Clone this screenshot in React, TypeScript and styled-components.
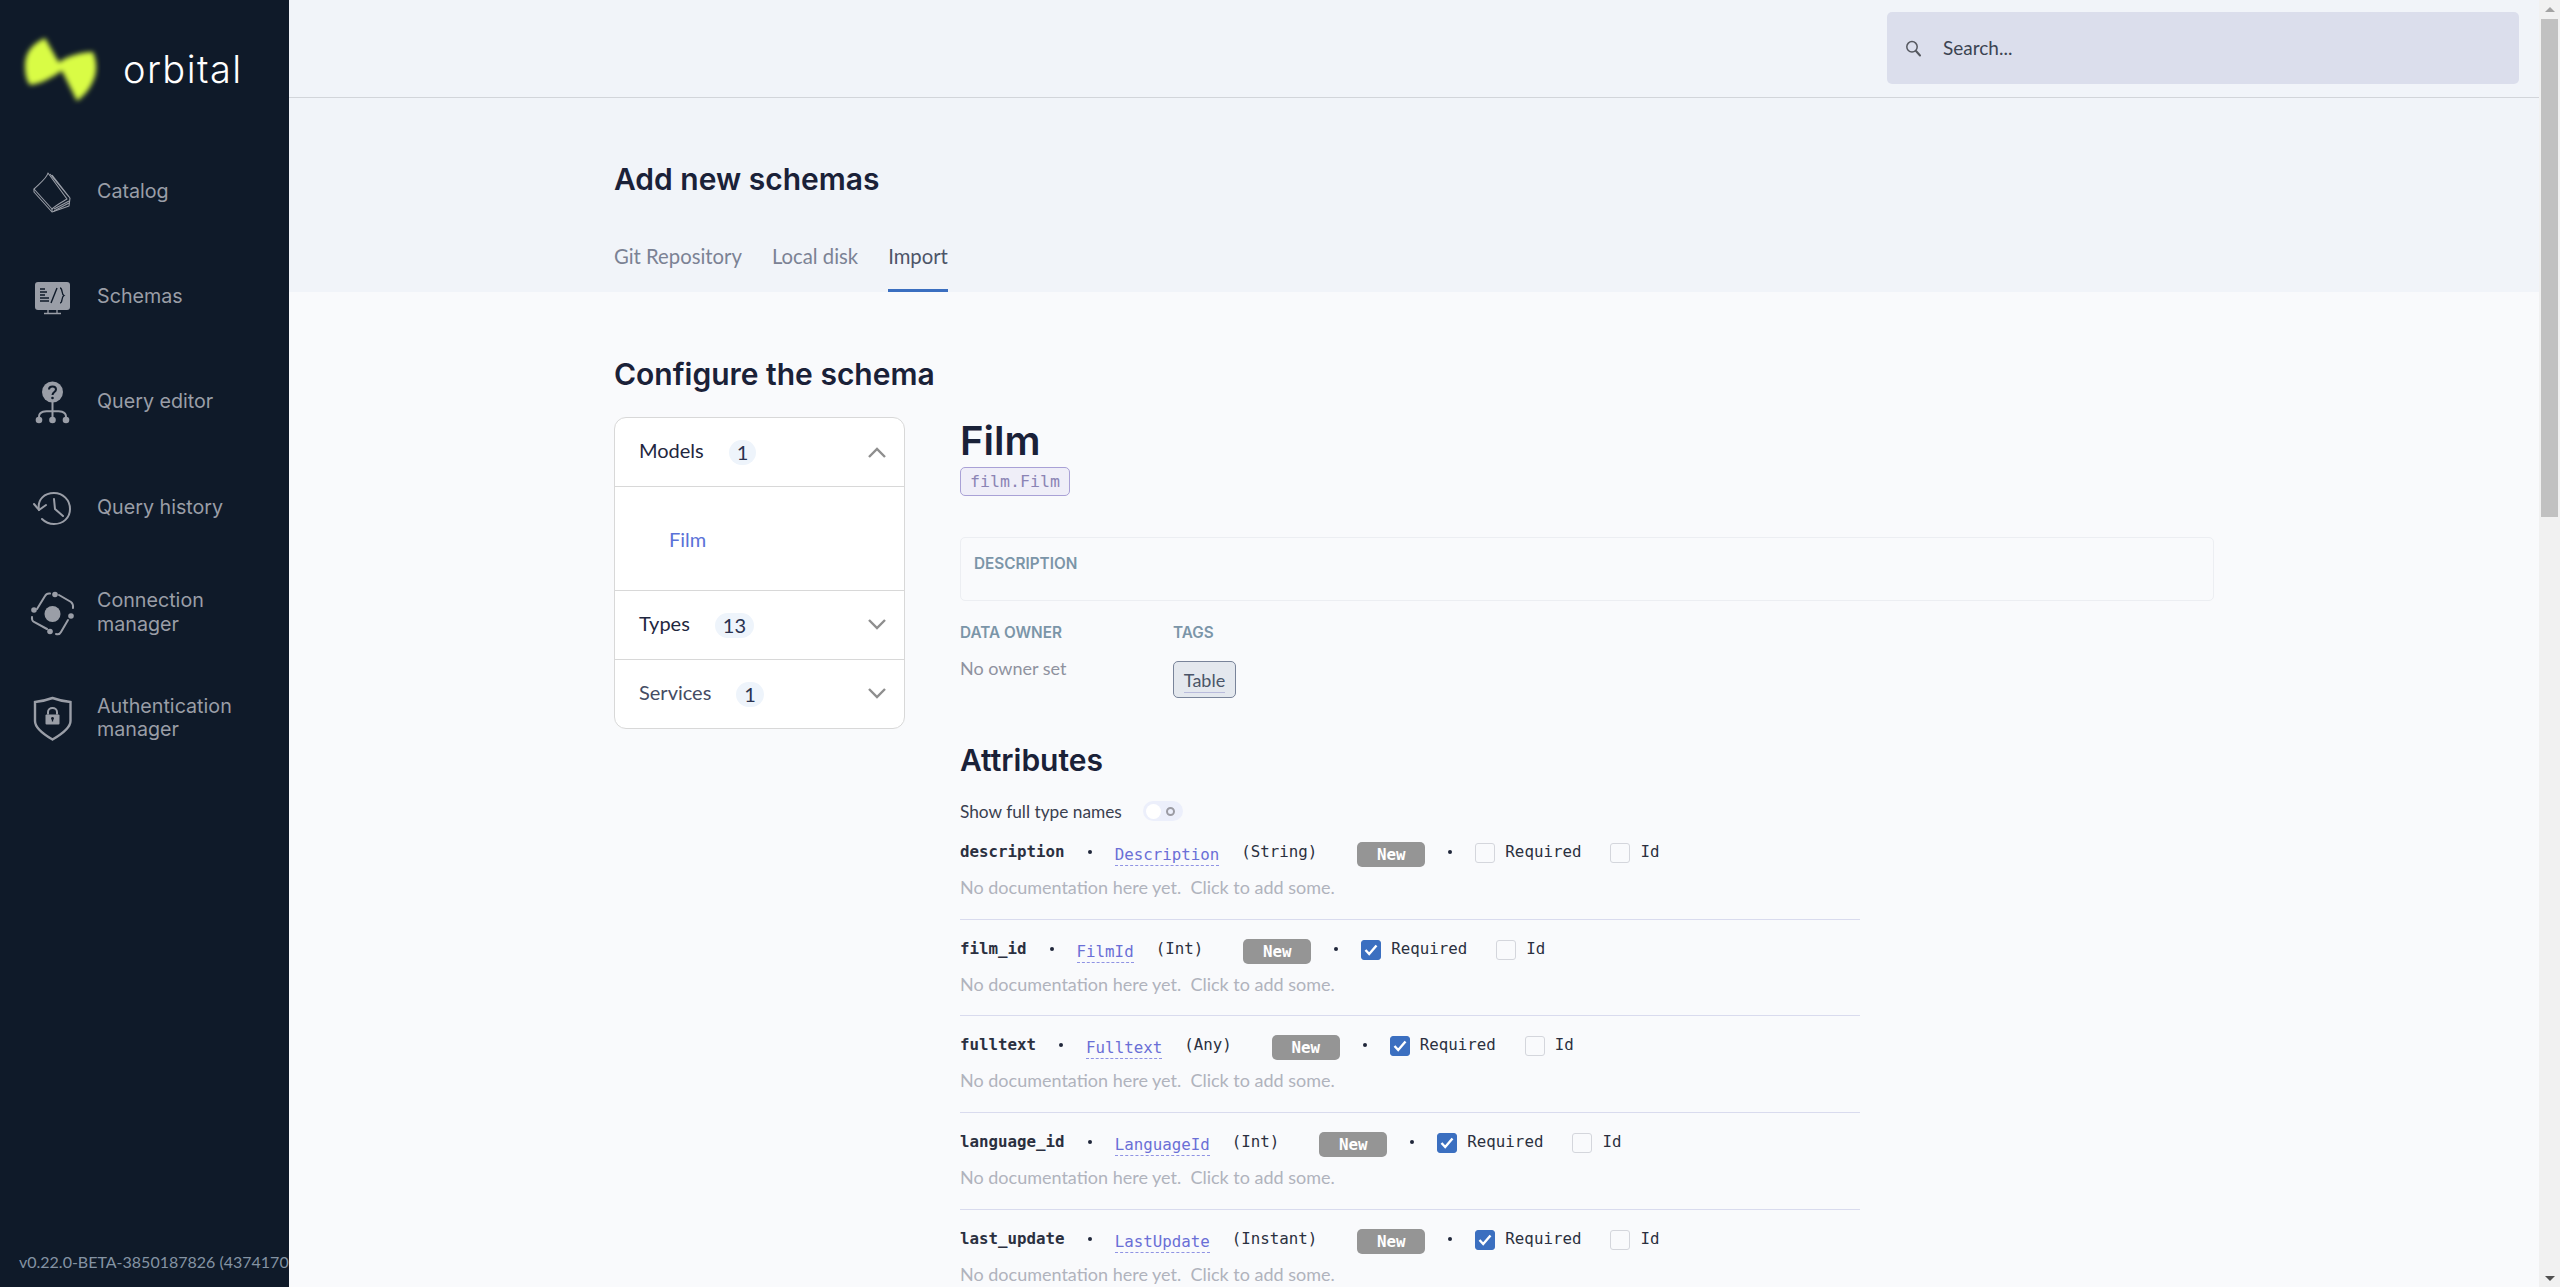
import React from 'react'
import styled, { createGlobalStyle } from 'styled-components'

const HEADING = `Inter, 'Liberation Sans', sans-serif`
const BODY = `Lato, 'Noto Sans', sans-serif`
const MONO = `'DejaVu Sans Mono', 'Liberation Mono', monospace`

type Attribute = {
  name: string
  type: string
  primitive: string
  required: boolean
}

const attributes: Attribute[] = [
  { name: 'description', type: 'Description', primitive: 'String', required: false },
  { name: 'film_id', type: 'FilmId', primitive: 'Int', required: true },
  { name: 'fulltext', type: 'Fulltext', primitive: 'Any', required: true },
  { name: 'language_id', type: 'LanguageId', primitive: 'Int', required: true },
  { name: 'last_update', type: 'LastUpdate', primitive: 'Instant', required: true },
]

const CatalogIcon = () => (
  <svg width="48" height="48" viewBox="0 0 48 48" fill="none" stroke="currentColor" strokeWidth="1.1" strokeLinejoin="round">
    <path d="M20 5 C19 10 12 15 6 21 L24 41 C28 37 34 34 39 31 Z" />
    <path d="M6 21 L6 24 L24 44 L41 38 L42 30" />
    <path d="M24 41 L24 44 M26 41 L41 33 M26 43 L41 35" />
    <path d="M22 6 L41 29 M24 7 L42 30" />
  </svg>
)

const SchemasIcon = () => (
  <svg width="48" height="48" viewBox="0 0 48 48" fill="none">
    <rect x="7" y="9" width="35" height="28" rx="3" fill="currentColor" />
    <path d="M20 37 L20 40 M29 37 L29 40 M16 40.5 L33 40.5" stroke="currentColor" strokeWidth="1.3" />
    <path d="M12 16 L17 16 M12 19 L19 19 M12 22 L17 22 M12 25 L21 25 M12 28 L21 28" stroke="#0f1a29" strokeWidth="1.3" />
    <path d="M23 30 L29 15" stroke="#0f1a29" strokeWidth="1.4" />
    <path d="M32 15 C35 15 33 21 36 22.5 C33 24 35 30 32 30" stroke="#0f1a29" strokeWidth="1.3" />
  </svg>
)

const QueryIcon = () => (
  <svg width="48" height="48" viewBox="0 0 48 48" fill="none" stroke="currentColor">
    <circle cx="24.5" cy="14" r="10.5" fill="currentColor" stroke="none" />
    <path d="M21 11.5 C21 7.5 28 7.5 28 11.5 C28 14 24.5 14 24.5 17" stroke="#0f1a29" strokeWidth="2" />
    <circle cx="24.5" cy="20" r="1.3" fill="#0f1a29" stroke="none" />
    <path d="M24.5 24 L24.5 42 M11 42 L11 39 C11 33 17 33 24.5 33 C32 33 38 33 38 39 L38 42" strokeWidth="2" />
    <circle cx="11" cy="42" r="3.3" fill="currentColor" stroke="none" />
    <circle cx="24.5" cy="42" r="3.3" fill="currentColor" stroke="none" />
    <circle cx="38" cy="42" r="3.3" fill="currentColor" stroke="none" />
  </svg>
)

const HistoryIcon = () => (
  <svg width="48" height="48" viewBox="0 0 48 48" fill="none" stroke="currentColor" strokeWidth="2" strokeLinecap="round">
    <path d="M11 26 C9 15 17 9 26 9 C35 9 42 16 42 25 C42 34 35 40 26 40 C21 40 17 38 14 35" />
    <path d="M6 20 L11 26 L18 21" />
    <path d="M26 15 L27 25 L35 32" />
  </svg>
)

const ConnectionIcon = () => (
  <svg width="48" height="48" viewBox="0 0 48 48" fill="none" stroke="currentColor" strokeWidth="2" strokeLinecap="round">
    <circle cx="24.5" cy="25" r="8" fill="currentColor" stroke="none" />
    <path d="M9 20 L17 7 Q18.5 4 22 4.5" />
    <path d="M31 6 L43 13 Q45.5 15 45 19" />
    <path d="M40 31 L33 43 Q31.5 46 28 45" />
    <path d="M19 40 L6 33 Q3.5 31.5 4 28" />
    <circle cx="27" cy="5.5" r="2.8" fill="currentColor" stroke="none" />
    <circle cx="43" cy="27" r="2.8" fill="currentColor" stroke="none" />
    <circle cx="22" cy="42.5" r="2.8" fill="currentColor" stroke="none" />
    <circle cx="6" cy="21" r="2.8" fill="currentColor" stroke="none" />
  </svg>
)

const AuthIcon = () => (
  <svg width="48" height="48" viewBox="0 0 48 48" fill="none">
    <path d="M24.5 4 C30 6 37 7.5 42.5 8 L42.5 27 C42.5 34 34 40 24.5 45.5 C15 40 7 34 7 27 L7 8 C12.5 7.5 19 6 24.5 4 Z" stroke="currentColor" strokeWidth="2.4" />
    <rect x="17.5" y="20.5" width="14" height="10" rx="1" fill="currentColor" />
    <path d="M20 20.5 L20 18 C20 12.5 29 12.5 29 18 L29 20.5" stroke="currentColor" strokeWidth="2" />
    <circle cx="24.5" cy="24.5" r="1.4" fill="#0f1a29" />
    <path d="M24.5 24.5 L24.5 27.5" stroke="#0f1a29" strokeWidth="1.3" />
  </svg>
)

const SearchIcon = () => (
  <svg width="17" height="17" viewBox="0 0 17 17" fill="none" stroke="#55585f" strokeWidth="1.5" strokeLinecap="round">
    <circle cx="7" cy="6.8" r="5.2" />
    <path d="M11 11 L15 15.5" strokeWidth="2" />
  </svg>
)

const Chevron = ({ up }: { up?: boolean }) => (
  <svg width="20" height="12" viewBox="0 0 20 12" fill="none" stroke="#8e8e8e" strokeWidth="2.4">
    <path d={up ? 'M2 11 L10 3 L18 11' : 'M2 1 L10 9 L18 1'} />
  </svg>
)

const Logo = () => (
  <svg width="84" height="80" viewBox="0 0 84 80">
    <defs>
      <filter id="logo-blur" x="-20%" y="-20%" width="140%" height="140%">
        <feGaussianBlur stdDeviation="2.8" />
      </filter>
    </defs>
    <g fill="#d9fc45" filter="url(#logo-blur)">
      <path d="M28 13 C15 19 8 28 8 40 C8 48 9 55 13 60 C24 59 36 52 46 45 Z" />
      <path d="M41 38 C50 31 64 27 76 27 C80 37 80 46 77 54 C73 64 67 71 60 76 Z" />
    </g>
  </svg>
)

const navItems = [
  { label: 'Catalog', icon: <CatalogIcon /> },
  { label: 'Schemas', icon: <SchemasIcon /> },
  { label: 'Query editor', icon: <QueryIcon /> },
  { label: 'Query history', icon: <HistoryIcon /> },
  { label: 'Connection manager', icon: <ConnectionIcon /> },
  { label: 'Authentication manager', icon: <AuthIcon /> },
]

const App: React.FC = () => (
  <Shell>
    <GlobalStyle />
    <Sidebar>
      <Brand>
        <Logo />
        <BrandName>orbital</BrandName>
      </Brand>
      <Nav>
        {navItems.map((item) => (
          <NavItem key={item.label}>
            {item.icon}
            <NavLabel>{item.label}</NavLabel>
          </NavItem>
        ))}
      </Nav>
      <Version>v0.22.0-BETA-3850187826 (4374170)</Version>
    </Sidebar>

    <Main>
      <TopBar>
        <SearchBox>
          <SearchIcon />
          <SearchText>Search...</SearchText>
        </SearchBox>
      </TopBar>

      <PageHeader>
        <PageTitle>Add new schemas</PageTitle>
        <Tabs>
          <Tab>Git Repository</Tab>
          <Tab>Local disk</Tab>
          <Tab $active>Import</Tab>
        </Tabs>
      </PageHeader>

      <Content>
        <SectionTitle>Configure the schema</SectionTitle>
        <Columns>
          <Accordion>
            <AccordionRow>
              <AccordionLabel $strong>Models</AccordionLabel>
              <Count>1</Count>
              <Chevron up />
            </AccordionRow>
            <AccordionBody>
              <ModelLink>Film</ModelLink>
            </AccordionBody>
            <AccordionRow>
              <AccordionLabel $strong>Types</AccordionLabel>
              <Count>13</Count>
              <Chevron />
            </AccordionRow>
            <AccordionRow>
              <AccordionLabel>Services</AccordionLabel>
              <Count>1</Count>
              <Chevron />
            </AccordionRow>
          </Accordion>

          <Detail>
            <ModelTitle>Film</ModelTitle>
            <QualifiedName>film.Film</QualifiedName>

            <DescriptionBox>
              <Caption>DESCRIPTION</Caption>
            </DescriptionBox>

            <MetaRow>
              <MetaOwner>
                <Caption>DATA OWNER</Caption>
                <OwnerText>No owner set</OwnerText>
              </MetaOwner>
              <div>
                <Caption>TAGS</Caption>
                <TagChip>
                  <TagText>Table</TagText>
                </TagChip>
              </div>
            </MetaRow>

            <AttributesTitle>Attributes</AttributesTitle>
            <ToggleRow>
              <span>Show full type names</span>
              <Toggle>
                <Knob />
                <Ring />
              </Toggle>
            </ToggleRow>

            {attributes.map((attr) => (
              <AttributeRow key={attr.name}>
                <AttributeLine>
                  <AttrName>{attr.name}</AttrName>
                  <Dot />
                  <TypeLink>{attr.type}</TypeLink>
                  <Primitive>({attr.primitive})</Primitive>
                  <NewBadge>New</NewBadge>
                  <Dot />
                  <CheckField>
                    <Checkbox $checked={attr.required}>
                      {attr.required && (
                        <svg width="14" height="12" viewBox="0 0 14 12" fill="none" stroke="#fff" strokeWidth="2.4">
                          <path d="M1.5 6 L5.2 10 L12.5 1.5" />
                        </svg>
                      )}
                    </Checkbox>
                    Required
                  </CheckField>
                  <CheckField>
                    <Checkbox />
                    Id
                  </CheckField>
                </AttributeLine>
                <DocText>No documentation here yet.&nbsp; Click to add some.</DocText>
              </AttributeRow>
            ))}
          </Detail>
        </Columns>
      </Content>
    </Main>

    <ScrollRail>
      <ScrollArrow $up />
      <ScrollThumb />
      <ScrollArrow />
    </ScrollRail>
  </Shell>
)

export default App

const GlobalStyle = createGlobalStyle`
  html, body {
    margin: 0;
    height: 100%;
    overflow: hidden;
  }
  * {
    box-sizing: border-box;
  }
`

const Shell = styled.div`
  display: flex;
  height: 100vh;
  font-family: ${BODY};
`

const Sidebar = styled.aside`
  width: 289px;
  flex-shrink: 0;
  background: #0f1a29;
  display: flex;
  flex-direction: column;
  overflow: hidden;
  color: #9a9ea7;
`

const Brand = styled.div`
  display: flex;
  align-items: center;
  height: 97px;
  padding: 32px 0 0 17px;
`

const BrandName = styled.span`
  margin: 8px 0 0 22px;
  font-family: ${HEADING};
  font-weight: 300;
  font-size: 38px;
  line-height: 40px;
  color: #fff;
  letter-spacing: 1.4px;
`

const Nav = styled.nav`
  display: flex;
  flex-direction: column;
  padding-top: 42px;
  flex: 1;
`

const NavItem = styled.div`
  height: 105.3px;
  display: flex;
  align-items: center;
  gap: 21px;
  padding-left: 28px;
`

const NavLabel = styled.span`
  width: 155px;
  font-family: ${HEADING};
  font-size: 19.7px;
  line-height: 23.5px;
  color: #9a9ea7;
`

const Version = styled.div`
  padding: 0 0 15px 19px;
  font-size: 16px;
  line-height: 20px;
  white-space: nowrap;
  color: #8493a3;
`

const Main = styled.main`
  flex: 1;
  min-width: 0;
  overflow: hidden;
  background: #f9fafc;
`

const ScrollRail = styled.div`
  width: 21px;
  flex-shrink: 0;
  display: flex;
  flex-direction: column;
  align-items: center;
  background: #f1f1f1;
`

const ScrollArrow = styled.div<{ $up?: boolean }>`
  width: 0;
  height: 0;
  margin: ${(p) => (p.$up ? '7px 0 7px' : 'auto 0 6px')};
  border-left: 5px solid transparent;
  border-right: 5px solid transparent;
  border-${(p) => (p.$up ? 'bottom' : 'top')}: 5px solid ${(p) => (p.$up ? '#a3a3a3' : '#505050')};
`

const ScrollThumb = styled.div`
  width: 17px;
  height: 498px;
  background: #c1c1c1;
`

const TopBar = styled.header`
  height: 98px;
  display: flex;
  justify-content: flex-end;
  padding: 12px 20px 0 0;
  background: #f1f4f9;
  border-bottom: 1px solid #d2d5da;
`

const SearchBox = styled.div`
  width: 632px;
  height: 72px;
  display: flex;
  align-items: center;
  gap: 21px;
  padding-left: 18px;
  border-radius: 5px;
  background: #dbdeec;
`

const SearchText = styled.span`
  margin-bottom: 2px;
  font-size: 19px;
  color: #3c4452;
`

const PageHeader = styled.div`
  height: 194px;
  padding: 61px 0 0 325px;
  background: #f1f4f9;
  display: flex;
  flex-direction: column;
`

const PageTitle = styled.h1`
  margin: 0;
  font-family: ${HEADING};
  font-weight: 600;
  font-size: 30px;
  line-height: 40px;
  color: #1a2138;
`

const Tabs = styled.div`
  margin-top: auto;
  display: flex;
  gap: 30px;
`

const Tab = styled.div<{ $active?: boolean }>`
  height: 56px;
  padding-top: 6px;
  font-size: 20.3px;
  line-height: 28px;
  color: ${(p) => (p.$active ? '#4d5568' : '#7b8294')};
  border-bottom: 3px solid ${(p) => (p.$active ? '#3b6fc0' : 'transparent')};
`

const Content = styled.div`
  width: 1600px;
  margin-left: 325px;
  padding-top: 63px;
`

const SectionTitle = styled.h2`
  margin: 0;
  font-family: ${HEADING};
  font-weight: 600;
  font-size: 30px;
  line-height: 38px;
  color: #1a2138;
`

const Columns = styled.div`
  display: flex;
  align-items: flex-start;
  gap: 55px;
  margin-top: 24px;
`

const Accordion = styled.div`
  width: 291px;
  flex-shrink: 0;
  background: #fff;
  border: 1px solid #d8d8d8;
  border-radius: 12px;
  overflow: hidden;
`

const AccordionRow = styled.div`
  height: 69px;
  display: flex;
  align-items: center;
  padding: 0 17px 0 24px;
  border-bottom: 1px solid #d8d8d8;

  &:last-child {
    height: 68px;
    border-bottom: none;
  }
  & > svg {
    margin-left: auto;
  }
`

const AccordionLabel = styled.span<{ $strong?: boolean }>`
  margin-bottom: 5px;
  font-size: 20px;
  color: ${(p) => (p.$strong ? '#1f2740' : '#454c63')};
`

const Count = styled.span`
  min-width: 27px;
  height: 25px;
  margin-left: 25px;
  padding: 0 8px;
  display: flex;
  align-items: center;
  justify-content: center;
  border-radius: 13px;
  background: #eef4fb;
  font-size: 20px;
  color: #2a3250;
`

const AccordionBody = styled.div`
  height: 104px;
  display: flex;
  align-items: center;
  padding-left: 54px;
  border-bottom: 1px solid #d8d8d8;
`

const ModelLink = styled.span`
  font-size: 20px;
  color: #5a72d8;
`

const Detail = styled.div`
  flex: 1;
  min-width: 0;
`

const ModelTitle = styled.h1`
  margin: 0 0 2px;
  font-family: ${HEADING};
  font-weight: 600;
  font-size: 40px;
  line-height: 48px;
  color: #1a2138;
`

const QualifiedName = styled.span`
  display: inline-block;
  height: 29px;
  padding: 0 9px;
  border: 1px solid #a9a1d6;
  border-radius: 5px;
  background: #efeef8;
  font-family: ${MONO};
  font-size: 16.6px;
  line-height: 27px;
  color: #8b84b5;
`

const DescriptionBox = styled.div`
  height: 64px;
  margin-top: 41px;
  padding: 17px 13px;
  border: 1px solid #eceef2;
  border-radius: 5px;
`

const Caption = styled.div`
  font-family: ${HEADING};
  font-size: 15.3px;
  line-height: 18px;
  font-weight: 600;
  color: #7b95a8;
`

const MetaRow = styled.div`
  display: flex;
  margin-top: 23px;
`

const MetaOwner = styled.div`
  width: 213px;
`

const OwnerText = styled.div`
  margin-top: 15px;
  font-size: 18px;
  line-height: 22px;
  color: #8f929f;
`

const TagChip = styled.div`
  width: 63px;
  height: 37px;
  margin-top: 19px;
  display: flex;
  justify-content: center;
  padding-top: 7px;
  border: 1px solid #79849a;
  border-radius: 5px;
  background: #e4e8ee;
`

const TagText = styled.span`
  height: 24px;
  font-size: 18px;
  line-height: 22px;
  color: #4a5568;
  border-bottom: 1px solid #b9bbdc;
`

const AttributesTitle = styled.h2`
  margin: 43px 0 0;
  font-family: ${HEADING};
  font-weight: 600;
  font-size: 30px;
  line-height: 38px;
  color: #1a2138;
`

const ToggleRow = styled.div`
  display: flex;
  align-items: center;
  gap: 21px;
  height: 24px;
  margin-top: 20px;
  font-size: 17.3px;
  color: #39404f;
`

const Toggle = styled.div`
  width: 40px;
  height: 20px;
  display: flex;
  align-items: center;
  justify-content: space-between;
  padding: 0 8px 0 3px;
  border-radius: 10px;
  background: #eceffb;
`

const Knob = styled.span`
  width: 15px;
  height: 15px;
  border-radius: 50%;
  background: #fff;
`

const Ring = styled.span`
  width: 9px;
  height: 9px;
  border-radius: 50%;
  border: 2px solid #9b9ba3;
`

const AttributeRow = styled.div`
  width: 900px;
  height: 96.7px;
  padding-top: 19px;
  border-bottom: 1px solid #d9dbee;
`

const AttributeLine = styled.div`
  display: flex;
  align-items: flex-start;
  height: 26px;
  font-family: ${MONO};
  font-size: 15.8px;
  line-height: 20px;
  color: #2b3040;
`

const AttrName = styled.span`
  font-weight: 700;
  color: #2b3040;
`

const Dot = styled.span`
  width: 4px;
  height: 4px;
  margin: 8px 23px 0;
  border-radius: 50%;
  background: #20263a;
`

const TypeLink = styled.span`
  margin-top: 3px;
  color: #6a6fd6;
  border-bottom: 1px dashed #8f93e4;
`

const Primitive = styled.span`
  margin-left: 22px;
`

const NewBadge = styled.span`
  width: 68px;
  height: 25px;
  margin-left: 40px;
  border-radius: 5px;
  background: #959595;
  color: #fff;
  font-weight: 700;
  line-height: 25px;
  text-align: center;
`

const CheckField = styled.span`
  display: flex;
  gap: 10px;
  margin-right: 29px;
`

const Checkbox = styled.span<{ $checked?: boolean }>`
  width: 20px;
  height: 20px;
  margin-top: 1px;
  display: flex;
  align-items: center;
  justify-content: center;
  border-radius: 3px;
  border: 1px solid ${(p) => (p.$checked ? '#3b6fc0' : '#d4d6dc')};
  background: ${(p) => (p.$checked ? '#3b6fc0' : 'transparent')};
`

const DocText = styled.div`
  margin-top: 7px;
  font-size: 18px;
  line-height: 24px;
  color: #b0b3bd;
`
